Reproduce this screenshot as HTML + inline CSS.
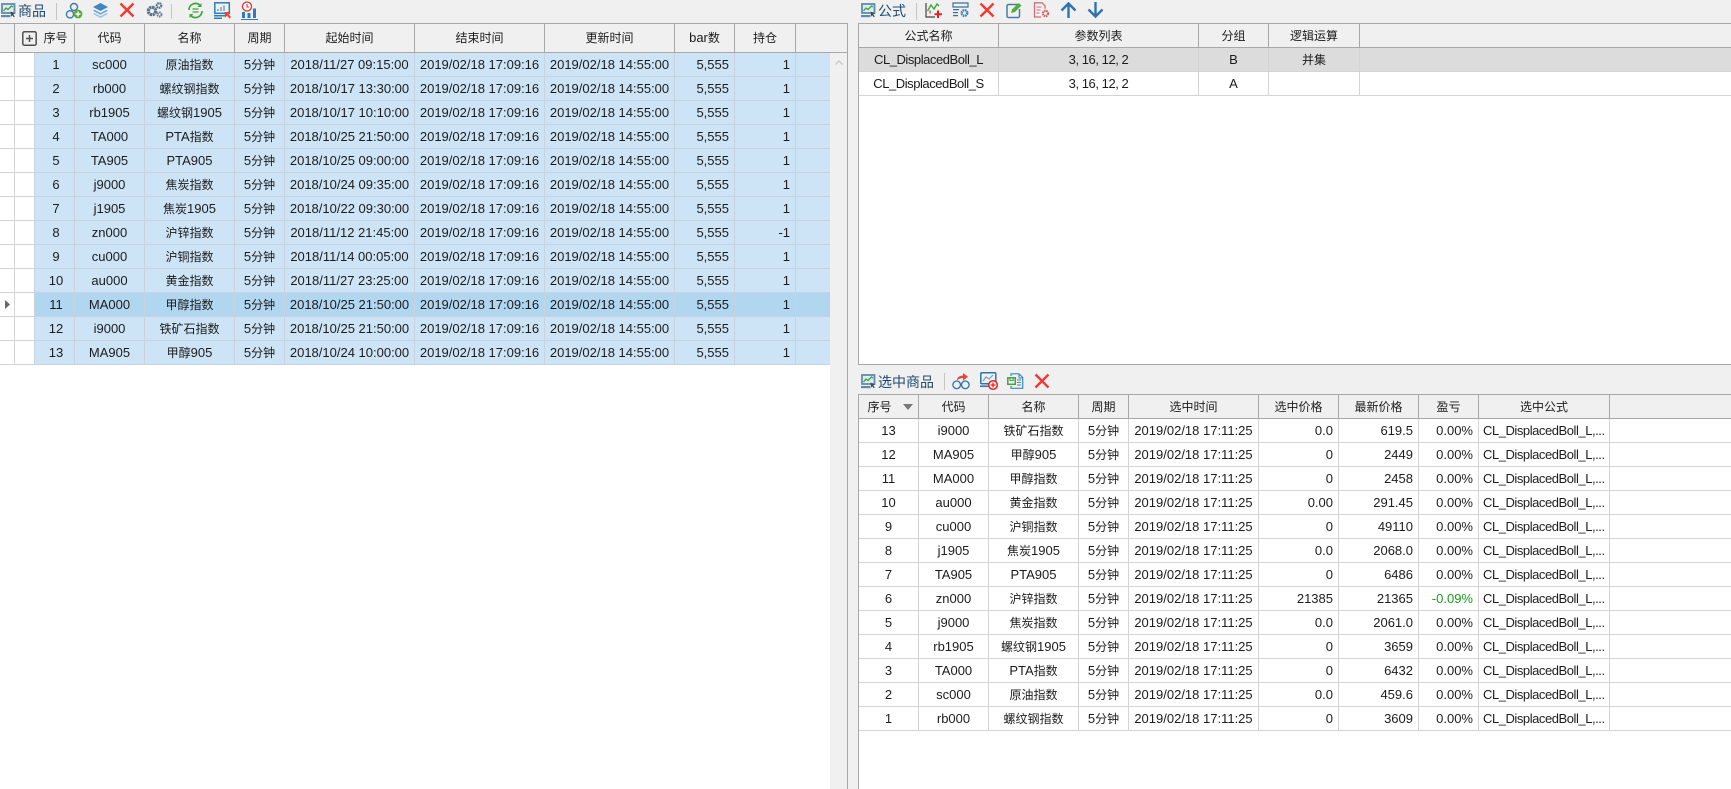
<!DOCTYPE html>
<html lang="zh"><head><meta charset="utf-8"><title>商品</title>
<style>
html,body{margin:0;padding:0;width:1731px;height:789px;overflow:hidden;background:#f0f0f0}
body{position:relative;font:13px "Liberation Sans","Noto Sans CJK SC",sans-serif;color:#1c1c1c}
.a{position:absolute}
i{font-style:normal;font-size:12px;font-family:"Noto Sans CJK SC","Liberation Sans",sans-serif}
table{position:absolute;border-collapse:separate;border-spacing:0;table-layout:fixed}
td,th{box-sizing:border-box;padding:0;text-align:center;white-space:nowrap;overflow:hidden;font-weight:normal;height:24px;line-height:22px;border-right:1px solid #d4d4d4;border-bottom:1px solid #d4d4d4}
th{background:#f0f0f0;border-right:1px solid #a8a8a8;border-bottom:1px solid #a8a8a8;border-top:1px solid #a8a8a8}
th:first-child{border-left:1px solid #a8a8a8}
td:first-child{border-left:1px solid #d4d4d4}
.r{text-align:right;padding-right:5px}
.l{text-align:left;padding-left:4px}
.f{letter-spacing:-.45px}
#L td{background:#cce4f5;border-color:#c9d3e0}
#L td:first-child{background:linear-gradient(90deg,#fff 19px,#c9d3e0 19px,#c9d3e0 20px,#cce4f5 20px);padding-left:23px;border-left-color:#d4d4d4}
#L tr.s td{background:#b0d6f0}
#L tr.s td:first-child{background:linear-gradient(90deg,#fff 19px,#c9d3e0 19px,#c9d3e0 20px,#b0d6f0 20px)}
#L th{height:30px}
#T th,#B th{height:25px;line-height:23px}
#T th:first-child,#B th:first-child{border-left:0}
#T td:first-child,#B td:first-child{border-left:0}
#T td{background:#fff}
#T tr.g td{background:#dcdcdc}
#B td{background:#fff}
.t{font-size:14px;color:#1e4a6e;line-height:20px;font-family:"Noto Sans CJK SC","Liberation Sans",sans-serif}
.sep{position:absolute;width:1px;background:#c4c4c4}
svg{position:absolute;overflow:visible}
.rh{position:absolute;left:0;width:14px;height:1px;background:#d4d4d4}
</style></head><body>
<svg width="0" height="0" style="position:absolute">
<defs>
<symbol id="app" viewBox="0 0 15 15"><rect x="1" y="1" width="12.500" height="9" fill="#dfeaf1" stroke="#5f8cab" stroke-width="1.800"/><path d="M2.500 8l2.500-3 2 1.500 3.500-3.500 1.500 1" fill="none" stroke="#3da23d" stroke-width="1.300"/><path d="M0 12h9.500v2.200H0z" fill="#5f8cab"/><path d="M9.500 8.500l4.500 2.200-1.800.7 1.600 2-1 .8-1.600-2-1 1.600z" fill="#3c4a55"/></symbol>
<symbol id="x" viewBox="0 0 16 16"><path d="M1.500 1.500l13 13M14.500 1.500l-13 13" stroke="#ee3b33" stroke-width="2.400" fill="none"/></symbol>
</defs></svg>

<!-- Left toolbar -->
<svg style="left:1px;top:3px" width="15" height="15"><use href="#app"/></svg>
<div class="a t" style="left:18px;top:1px">商品</div>
<div class="sep" style="left:56px;top:3px;height:17px"></div>
<svg style="left:65px;top:2px" width="18" height="17" viewBox="0 0 18 17" fill="none"><circle cx="9" cy="5" r="3.500" stroke="#3f78ad" stroke-width="1.400"/><circle cx="5" cy="12.300" r="3.600" stroke="#3f78ad" stroke-width="1.400"/><circle cx="13" cy="12" r="4.400" fill="#57a83e"/><path d="M13 9.500v5M10.500 12h5" stroke="#fff" stroke-width="1.500"/></svg>
<svg style="left:92px;top:2px" width="17" height="16" viewBox="0 0 17 16"><path d="M8.500 1L16 5l-7.500 4L1 5z" fill="#3f88c0"/><path d="M2.500 7.800L1 8.700l7.500 4 7.500-4-1.500-.9-6 3.200z" fill="#6ba6d2"/><path d="M2.500 11L1 12l7.500 4 7.500-4-1.500-1-6 3.200z" fill="#9cc4e2"/></svg>
<svg style="left:119px;top:2px" width="16" height="16"><use href="#x"/></svg>
<svg style="left:146px;top:2px" width="17" height="16" viewBox="0 0 17 16" fill="none"><circle cx="6" cy="9" r="3.700" stroke="#55708a" stroke-width="3.200" stroke-dasharray="2.300 .6"/><circle cx="13" cy="3.500" r="2.300" stroke="#55708a" stroke-width="2.200" stroke-dasharray="1.600 .6"/><circle cx="13.500" cy="12.500" r="2" stroke="#6f8597" stroke-width="2" stroke-dasharray="1.600 .6"/></svg>
<div class="sep" style="left:171px;top:4px;height:15px"></div>
<svg style="left:187px;top:2px" width="17" height="17" viewBox="0 0 17 17" fill="none"><path d="M2 8a6.500 6.500 0 0 1 11-4.700" stroke="#3fa53c" stroke-width="1.700"/><path d="M15 9a6.500 6.500 0 0 1-11 4.700" stroke="#3fa53c" stroke-width="1.700"/><path d="M14.500 1v4h-4zM2.500 16v-4h4z" fill="#3fa53c"/><path d="M5.500 7h6M5.500 10h6" stroke="#3fa53c" stroke-width="1.300"/></svg>
<svg style="left:214px;top:2px" width="17" height="17" viewBox="0 0 17 17" fill="none"><rect x=".8" y=".8" width="14.500" height="10.500" stroke="#2f7cb8" stroke-width="1.500"/><path d="M4 9V7M7 9V5M10 9V3.500" stroke="#6aa3cf" stroke-width="1.500"/><path d="M0 13h11v1.500H0zM0 15.500h8V17H0z" fill="#2f7cb8"/><path d="M10.500 10h6l-2 2 2.500 3-1.500 1.500-2.500-2.800-2 2z" fill="#e8463c"/></svg>
<svg style="left:241px;top:1px" width="17" height="19" viewBox="0 0 17 19" fill="none"><circle cx="6" cy="5.500" r="4.500" fill="#fff" stroke="#e5302a" stroke-width="1.300"/><path d="M6 3v3h2.200" stroke="#e5302a" stroke-width="1.100"/><path d="M1 11h3v6H1zM6.500 12h3v5h-3zM12 7.500h3V17h-3z" fill="#2f7cb8"/><path d="M0 18h17v1H0z" fill="#2f7cb8"/></svg>

<!-- Left table -->
<div class="a" style="left:0;top:23px;width:14px;height:1px;background:#a8a8a8"></div>
<div class="a" style="left:0;top:52px;width:14px;height:1px;background:#a8a8a8"></div>
<table id="L" style="left:14px;top:23px;width:834px">
<colgroup><col style="width:61px"><col style="width:70px"><col style="width:90px"><col style="width:50px"><col style="width:130px"><col style="width:130px"><col style="width:130px"><col style="width:60px"><col style="width:61px"><col style="width:52px"></colgroup>
<tr><th style="padding-left:22px"><i>序号</i></th><th><i>代码</i></th><th><i>名称</i></th><th><i>周期</i></th><th><i>起始时间</i></th><th><i>结束时间</i></th><th><i>更新时间</i></th><th>bar<i>数</i></th><th><i>持仓</i></th><th></th></tr>
<tr><td>1</td><td>sc000</td><td><i>原油指数</i></td><td>5<i>分钟</i></td><td>2018/11/27 09:15:00</td><td>2019/02/18 17:09:16</td><td>2019/02/18 14:55:00</td><td class="r">5,555</td><td class="r">1</td><td></td></tr>
<tr><td>2</td><td>rb000</td><td><i>螺纹钢指数</i></td><td>5<i>分钟</i></td><td>2018/10/17 13:30:00</td><td>2019/02/18 17:09:16</td><td>2019/02/18 14:55:00</td><td class="r">5,555</td><td class="r">1</td><td></td></tr>
<tr><td>3</td><td>rb1905</td><td><i>螺纹钢</i>1905</td><td>5<i>分钟</i></td><td>2018/10/17 10:10:00</td><td>2019/02/18 17:09:16</td><td>2019/02/18 14:55:00</td><td class="r">5,555</td><td class="r">1</td><td></td></tr>
<tr><td>4</td><td>TA000</td><td>PTA<i>指数</i></td><td>5<i>分钟</i></td><td>2018/10/25 21:50:00</td><td>2019/02/18 17:09:16</td><td>2019/02/18 14:55:00</td><td class="r">5,555</td><td class="r">1</td><td></td></tr>
<tr><td>5</td><td>TA905</td><td>PTA905</td><td>5<i>分钟</i></td><td>2018/10/25 09:00:00</td><td>2019/02/18 17:09:16</td><td>2019/02/18 14:55:00</td><td class="r">5,555</td><td class="r">1</td><td></td></tr>
<tr><td>6</td><td>j9000</td><td><i>焦炭指数</i></td><td>5<i>分钟</i></td><td>2018/10/24 09:35:00</td><td>2019/02/18 17:09:16</td><td>2019/02/18 14:55:00</td><td class="r">5,555</td><td class="r">1</td><td></td></tr>
<tr><td>7</td><td>j1905</td><td><i>焦炭</i>1905</td><td>5<i>分钟</i></td><td>2018/10/22 09:30:00</td><td>2019/02/18 17:09:16</td><td>2019/02/18 14:55:00</td><td class="r">5,555</td><td class="r">1</td><td></td></tr>
<tr><td>8</td><td>zn000</td><td><i>沪锌指数</i></td><td>5<i>分钟</i></td><td>2018/11/12 21:45:00</td><td>2019/02/18 17:09:16</td><td>2019/02/18 14:55:00</td><td class="r">5,555</td><td class="r">-1</td><td></td></tr>
<tr><td>9</td><td>cu000</td><td><i>沪铜指数</i></td><td>5<i>分钟</i></td><td>2018/11/14 00:05:00</td><td>2019/02/18 17:09:16</td><td>2019/02/18 14:55:00</td><td class="r">5,555</td><td class="r">1</td><td></td></tr>
<tr><td>10</td><td>au000</td><td><i>黄金指数</i></td><td>5<i>分钟</i></td><td>2018/11/27 23:25:00</td><td>2019/02/18 17:09:16</td><td>2019/02/18 14:55:00</td><td class="r">5,555</td><td class="r">1</td><td></td></tr>
<tr class="s"><td>11</td><td>MA000</td><td><i>甲醇指数</i></td><td>5<i>分钟</i></td><td>2018/10/25 21:50:00</td><td>2019/02/18 17:09:16</td><td>2019/02/18 14:55:00</td><td class="r">5,555</td><td class="r">1</td><td></td></tr>
<tr><td>12</td><td>i9000</td><td><i>铁矿石指数</i></td><td>5<i>分钟</i></td><td>2018/10/25 21:50:00</td><td>2019/02/18 17:09:16</td><td>2019/02/18 14:55:00</td><td class="r">5,555</td><td class="r">1</td><td></td></tr>
<tr><td>13</td><td>MA905</td><td><i>甲醇</i>905</td><td>5<i>分钟</i></td><td>2018/10/24 10:00:00</td><td>2019/02/18 17:09:16</td><td>2019/02/18 14:55:00</td><td class="r">5,555</td><td class="r">1</td><td></td></tr>
</table>
<svg style="left:22px;top:31px" width="15" height="15" viewBox="0 0 15 15" fill="none"><rect x=".8" y=".8" width="13.400" height="13.400" rx="1.500" stroke="#4f4f4f" stroke-width="1.500"/><path d="M7.500 4v7M4 7.500h7" stroke="#4f4f4f" stroke-width="1.500"/></svg>

<!-- white regions under and left of the left table -->
<div class="a" style="left:0;top:53px;width:14px;height:312px;background:#fff"></div>
<div class="a" style="left:0;top:365px;width:830px;height:424px;background:#fff"></div>
<div class="rh" style="top:76px"></div><div class="rh" style="top:100px"></div><div class="rh" style="top:124px"></div><div class="rh" style="top:148px"></div><div class="rh" style="top:172px"></div><div class="rh" style="top:196px"></div><div class="rh" style="top:220px"></div><div class="rh" style="top:244px"></div><div class="rh" style="top:268px"></div><div class="rh" style="top:292px"></div><div class="rh" style="top:316px"></div><div class="rh" style="top:340px"></div><div class="rh" style="top:364px"></div>
<svg style="left:5px;top:300px" width="5" height="9"><path d="M0 0l5 4.500L0 9z" fill="#666"/></svg>
<!-- scrollbar track -->
<div class="a" style="left:830px;top:53px;width:17px;height:736px;background:#f0f0f0"></div>
<svg style="left:835px;top:60px" width="8" height="5" fill="none"><path d="M.5 4.500L4 1l3.500 3.500" stroke="#c2c2c2" stroke-width="1.200"/></svg>
<div class="a" style="left:847px;top:23px;width:1px;height:766px;background:#a8a8a8"></div>

<!-- Right top toolbar -->
<svg style="left:861px;top:3px" width="15" height="15"><use href="#app"/></svg>
<div class="a t" style="left:878px;top:1px">公式</div>
<div class="sep" style="left:916px;top:3px;height:17px"></div>
<svg style="left:925px;top:2px" width="17" height="16" viewBox="0 0 17 16" fill="none"><path d="M1 1v14h9" stroke="#444" stroke-width="1.200"/><path d="M2.500 9L6 3l3 4 3-5 2 2" stroke="#3fa53c" stroke-width="1.400"/><path d="M5 8.500v3" stroke="#e5302a" stroke-width="1.200"/><path d="M13 8.500v7.500M9.500 12.300h7.500" stroke="#e5201f" stroke-width="2"/></svg>
<svg style="left:952px;top:2px" width="17" height="16" viewBox="0 0 17 16"><path d="M1 1h15v4H1z" fill="none" stroke="#3d6f95" stroke-width="1.200"/><path d="M1 7h6v1.300H1zM1 10h5v1.300H1zM1 13h5v1.300H1z" fill="#3d6f95"/><circle cx="12.500" cy="11" r="2.800" fill="none" stroke="#2f7cb8" stroke-width="2.400" stroke-dasharray="1.500 .7"/></svg>
<svg style="left:979px;top:2px" width="16" height="16"><use href="#x"/></svg>
<svg style="left:1006px;top:2px" width="17" height="16" viewBox="0 0 17 16" fill="none"><path d="M12 2.500H2.500a1.500 1.500 0 0 0-1.500 1.500v10a1.500 1.500 0 0 0 1.500 1.500H12a1.500 1.500 0 0 0 1.500-1.500V7" stroke="#4a7ca5" stroke-width="1.500"/><path d="M5 11l1-3.500L12.500 1 15.500 3.500 9 10z" fill="#4fae3c"/></svg>
<svg style="left:1033px;top:2px" width="17" height="16" viewBox="0 0 17 16" fill="none"><path d="M8 15H1.500V.8H9l3 3v3" stroke="#c9707a" stroke-width="1.300"/><path d="M3.500 5h5M3.500 8h4M3.500 11h3" stroke="#c9707a" stroke-width="1.100"/><circle cx="12.500" cy="11.500" r="2.600" stroke="#d0606c" stroke-width="2.200" stroke-dasharray="1.500 .6"/></svg>
<svg style="left:1060px;top:2px" width="17" height="16" viewBox="0 0 17 16" fill="none"><path d="M8.500 16V2M1.500 8.500l7-7 7 7" stroke="#2f73ad" stroke-width="2.400"/></svg>
<svg style="left:1087px;top:2px" width="17" height="16" viewBox="0 0 17 16" fill="none"><path d="M8.500 0v14M1.500 7.500l7 7 7-7" stroke="#2f73ad" stroke-width="2.400"/></svg>

<!-- Right top panel -->
<div class="a" style="left:858px;top:23px;width:872px;height:341px;background:#fff;border-left:1px solid #a8a8a8;border-bottom:1px solid #a8a8a8"></div>
<table id="T" style="left:859px;top:23px;width:872px">
<colgroup><col style="width:140px"><col style="width:200px"><col style="width:70px"><col style="width:91px"><col style="width:371px"></colgroup>
<tr><th><i>公式名称</i></th><th><i>参数列表</i></th><th><i>分组</i></th><th><i>逻辑运算</i></th><th style="border-right:0"></th></tr>
<tr class="g"><td class="f">CL_DisplacedBoll_L</td><td class="f">3, 16, 12, 2</td><td>B</td><td><i>并集</i></td><td style="border-right:0"></td></tr>
<tr><td class="f">CL_DisplacedBoll_S</td><td class="f">3, 16, 12, 2</td><td>A</td><td></td><td style="border-right:0"></td></tr>
</table>

<!-- Bottom toolbar -->
<svg style="left:861px;top:374px" width="15" height="15"><use href="#app"/></svg>
<div class="a t" style="left:878px;top:372px">选中商品</div>
<div class="sep" style="left:944px;top:373px;height:17px"></div>
<svg style="left:952px;top:372px" width="18" height="18" viewBox="0 0 18 18" fill="none"><circle cx="4.700" cy="12.800" r="3.800" stroke="#2f73ad" stroke-width="1.300"/><circle cx="13.300" cy="12.800" r="3.800" stroke="#2f73ad" stroke-width="1.300"/><path d="M8.500 12.800h1" stroke="#2f73ad" stroke-width="1.200"/><path d="M5 8.500c0-3 2-4.800 6-5V1l5 3.800-5 3.800V6C8.500 6 6.500 7 5 8.500z" fill="#e8463c"/></svg>
<svg style="left:980px;top:372px" width="18" height="18" viewBox="0 0 18 18" fill="none"><rect x=".8" y=".8" width="15" height="11" rx="1" stroke="#2f73ad" stroke-width="1.500"/><path d="M3 9l3-4 3 2 4-4" stroke="#6aa3cf" stroke-width="1.200"/><path d="M0 13.500h10V15H0z" fill="#2f73ad"/><circle cx="13" cy="13" r="4.300" fill="#fff" stroke="#e5201f" stroke-width="1.500"/><path d="M13 10.500v5M10.500 13h5" stroke="#e5201f" stroke-width="1.300"/></svg>
<svg style="left:1007px;top:373px" width="17" height="16" viewBox="0 0 17 16" fill="none"><path d="M4 3V.8h8l3.700 3.700V15.300H4V13" stroke="#3f88c0" stroke-width="1.200"/><path d="M12 1v4h4" stroke="#3f88c0" stroke-width="1"/><rect x=".8" y="4.800" width="7.500" height="6.500" fill="#f0f0f0" stroke="#3fa53c" stroke-width="1.500"/><path d="M3 5v2.500h3.200V5" stroke="#3fa53c"/><path d="M10 7h4M10 9.500h4M10 12h4" stroke="#3f88c0"/></svg>
<svg style="left:1034px;top:373px" width="16" height="16"><use href="#x"/></svg>

<!-- Bottom panel -->
<div class="a" style="left:858px;top:394px;width:873px;height:395px;background:#fff;border-left:1px solid #a8a8a8"></div>
<table id="B" style="left:859px;top:394px;width:872px">
<colgroup><col style="width:60px"><col style="width:70px"><col style="width:90px"><col style="width:50px"><col style="width:130px"><col style="width:80px"><col style="width:80px"><col style="width:60px"><col style="width:131px"><col style="width:121px"></colgroup>
<tr><th style="padding-right:18px"><i>序号</i></th><th><i>代码</i></th><th><i>名称</i></th><th><i>周期</i></th><th><i>选中时间</i></th><th><i>选中价格</i></th><th><i>最新价格</i></th><th><i>盈亏</i></th><th><i>选中公式</i></th><th style="border-right:0"></th></tr>
<tr><td>13</td><td>i9000</td><td><i>铁矿石指数</i></td><td>5<i>分钟</i></td><td>2019/02/18 17:11:25</td><td class="r">0.0</td><td class="r">619.5</td><td class="r">0.00%</td><td class="l f">CL_DisplacedBoll_L,...</td><td style="border-right:0"></td></tr>
<tr><td>12</td><td>MA905</td><td><i>甲醇</i>905</td><td>5<i>分钟</i></td><td>2019/02/18 17:11:25</td><td class="r">0</td><td class="r">2449</td><td class="r">0.00%</td><td class="l f">CL_DisplacedBoll_L,...</td><td style="border-right:0"></td></tr>
<tr><td>11</td><td>MA000</td><td><i>甲醇指数</i></td><td>5<i>分钟</i></td><td>2019/02/18 17:11:25</td><td class="r">0</td><td class="r">2458</td><td class="r">0.00%</td><td class="l f">CL_DisplacedBoll_L,...</td><td style="border-right:0"></td></tr>
<tr><td>10</td><td>au000</td><td><i>黄金指数</i></td><td>5<i>分钟</i></td><td>2019/02/18 17:11:25</td><td class="r">0.00</td><td class="r">291.45</td><td class="r">0.00%</td><td class="l f">CL_DisplacedBoll_L,...</td><td style="border-right:0"></td></tr>
<tr><td>9</td><td>cu000</td><td><i>沪铜指数</i></td><td>5<i>分钟</i></td><td>2019/02/18 17:11:25</td><td class="r">0</td><td class="r">49110</td><td class="r">0.00%</td><td class="l f">CL_DisplacedBoll_L,...</td><td style="border-right:0"></td></tr>
<tr><td>8</td><td>j1905</td><td><i>焦炭</i>1905</td><td>5<i>分钟</i></td><td>2019/02/18 17:11:25</td><td class="r">0.0</td><td class="r">2068.0</td><td class="r">0.00%</td><td class="l f">CL_DisplacedBoll_L,...</td><td style="border-right:0"></td></tr>
<tr><td>7</td><td>TA905</td><td>PTA905</td><td>5<i>分钟</i></td><td>2019/02/18 17:11:25</td><td class="r">0</td><td class="r">6486</td><td class="r">0.00%</td><td class="l f">CL_DisplacedBoll_L,...</td><td style="border-right:0"></td></tr>
<tr><td>6</td><td>zn000</td><td><i>沪锌指数</i></td><td>5<i>分钟</i></td><td>2019/02/18 17:11:25</td><td class="r">21385</td><td class="r">21365</td><td class="r" style="color:#1f9a1f">-0.09%</td><td class="l f">CL_DisplacedBoll_L,...</td><td style="border-right:0"></td></tr>
<tr><td>5</td><td>j9000</td><td><i>焦炭指数</i></td><td>5<i>分钟</i></td><td>2019/02/18 17:11:25</td><td class="r">0.0</td><td class="r">2061.0</td><td class="r">0.00%</td><td class="l f">CL_DisplacedBoll_L,...</td><td style="border-right:0"></td></tr>
<tr><td>4</td><td>rb1905</td><td><i>螺纹钢</i>1905</td><td>5<i>分钟</i></td><td>2019/02/18 17:11:25</td><td class="r">0</td><td class="r">3659</td><td class="r">0.00%</td><td class="l f">CL_DisplacedBoll_L,...</td><td style="border-right:0"></td></tr>
<tr><td>3</td><td>TA000</td><td>PTA<i>指数</i></td><td>5<i>分钟</i></td><td>2019/02/18 17:11:25</td><td class="r">0</td><td class="r">6432</td><td class="r">0.00%</td><td class="l f">CL_DisplacedBoll_L,...</td><td style="border-right:0"></td></tr>
<tr><td>2</td><td>sc000</td><td><i>原油指数</i></td><td>5<i>分钟</i></td><td>2019/02/18 17:11:25</td><td class="r">0.0</td><td class="r">459.6</td><td class="r">0.00%</td><td class="l f">CL_DisplacedBoll_L,...</td><td style="border-right:0"></td></tr>
<tr><td>1</td><td>rb000</td><td><i>螺纹钢指数</i></td><td>5<i>分钟</i></td><td>2019/02/18 17:11:25</td><td class="r">0</td><td class="r">3609</td><td class="r">0.00%</td><td class="l f">CL_DisplacedBoll_L,...</td><td style="border-right:0"></td></tr>
</table>
<svg style="left:903px;top:404px" width="10" height="6"><path d="M0 0h10L5 6z" fill="#777"/></svg>
</body></html>
